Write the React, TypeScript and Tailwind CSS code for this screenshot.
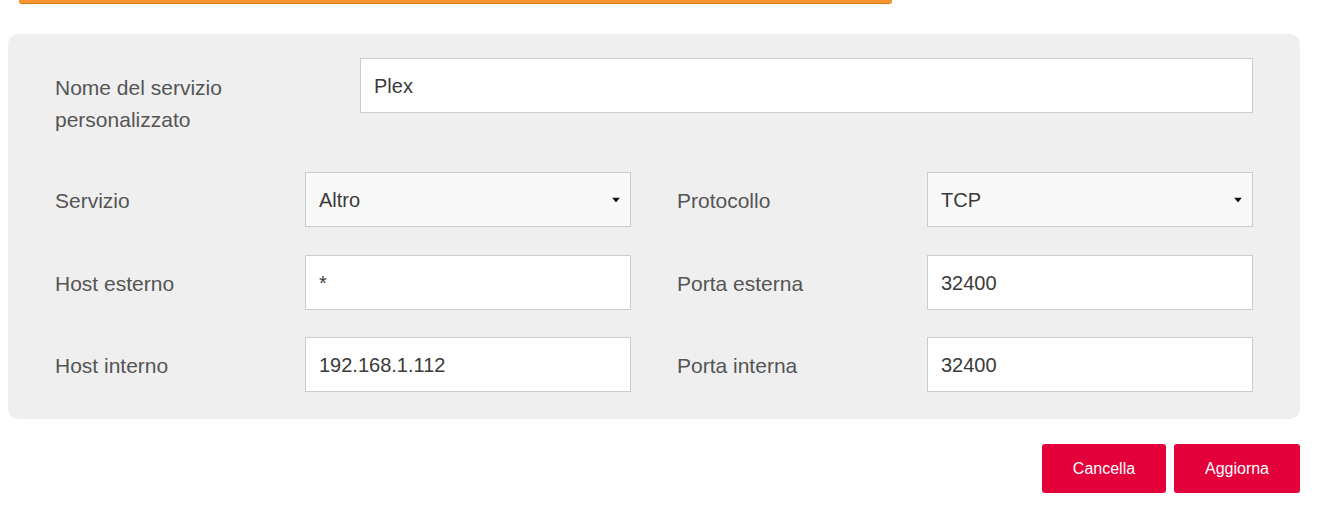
const font = { fontFamily: '"Liberation Sans", Arial, sans-serif' };

function Caret() {
  return (
    <svg width="8" height="5" viewBox="0 0 8 5" className="absolute right-[10px] top-1/2 -translate-y-1/2">
      <path d="M0 0 L8 0 L4 5 Z" fill="#111" />
    </svg>
  );
}

function Field({ value, select }: { value: string; select?: boolean }) {
  return (
    <div
      className={`relative flex h-[55px] w-[326px] items-center border border-[#cccccc] pl-[13px] text-[20px] text-[#3a3a3a] ${
        select ? "bg-[#f9f9f9]" : "bg-white"
      }`}
    >
      {value}
      {select && <Caret />}
    </div>
  );
}

function Half({ label, value, select }: { label: string; value: string; select?: boolean }) {
  return (
    <div className="flex w-[576px] items-center">
      <div className="w-[250px] pt-[3px] text-[21px] text-[#555555]">{label}</div>
      <Field value={value} select={select} />
    </div>
  );
}

export default function App() {
  return (
    <div className="min-h-[507px] w-[1330px] bg-white" style={font}>
      <div className="ml-[19px] h-[4px] w-[873px] rounded-b-[3px] border-b border-[#dd7a1a] bg-[#f59331]" />

      <div className="ml-[8px] mt-[30px] w-[1292px] rounded-[10px] bg-[#efefef] px-[47px] pb-[27px] pt-[24px]">
        <div className="flex items-start">
          <div className="mt-[14px] w-[305px] text-[21px] leading-[32px] text-[#555555]">
            Nome del servizio
            <br />
            personalizzato
          </div>
          <div className="flex h-[55px] flex-1 items-center border border-[#cccccc] bg-white pl-[13px] text-[20px] text-[#3a3a3a]">
            Plex
          </div>
        </div>

        <div className="mt-[36px] flex justify-between">
          <Half label="Servizio" value="Altro" select />
          <Half label="Protocollo" value="TCP" select />
        </div>
        <div className="mt-[28px] flex justify-between">
          <Half label="Host esterno" value="*" />
          <Half label="Porta esterna" value="32400" />
        </div>
        <div className="mt-[27px] flex justify-between">
          <Half label="Host interno" value="192.168.1.112" />
          <Half label="Porta interna" value="32400" />
        </div>
      </div>

      <div className="ml-[8px] mt-[25px] flex w-[1292px] justify-end gap-[8px]">
        <button className="h-[49px] w-[124px] rounded-[3px] bg-[#e4003b] text-[16px] text-white">
          Cancella
        </button>
        <button className="h-[49px] w-[126px] rounded-[3px] bg-[#e4003b] text-[16px] text-white">
          Aggiorna
        </button>
      </div>
    </div>
  );
}
